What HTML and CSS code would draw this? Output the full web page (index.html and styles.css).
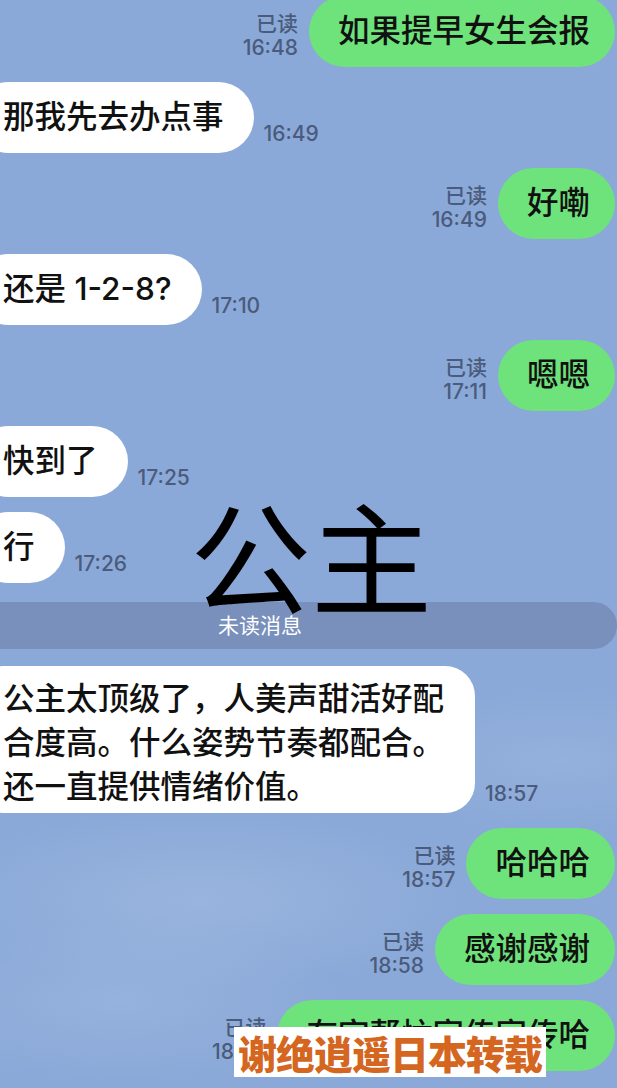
FILE: index.html
```html
<!DOCTYPE html>
<html lang="zh-CN">

<head>
    <meta charset="UTF-8">
    <meta name="viewport" content="width=device-width, initial-scale=1.0">
    <title>聊天记录</title>
    <link rel="stylesheet" href="styles.css">
</head>

<body>

    <main class="chat">

        <div class="row out">
            <div class="meta"><span>已读</span><span>16:48</span></div>
            <div class="bubble green">如果提早女生会报</div>
        </div>

        <div class="row in">
            <div class="bubble white">那我先去办点事</div>
            <div class="meta"><span>16:49</span></div>
        </div>

        <div class="row out">
            <div class="meta"><span>已读</span><span>16:49</span></div>
            <div class="bubble green">好嘞</div>
        </div>

        <div class="row in">
            <div class="bubble white">还是 1-2-8?</div>
            <div class="meta"><span>17:10</span></div>
        </div>

        <div class="row out">
            <div class="meta"><span>已读</span><span>17:11</span></div>
            <div class="bubble green">嗯嗯</div>
        </div>

        <div class="row in">
            <div class="bubble white">快到了</div>
            <div class="meta"><span>17:25</span></div>
        </div>

        <div class="row in">
            <div class="bubble white">行</div>
            <div class="meta"><span>17:26</span></div>
        </div>

        <!-- 未读分隔条 -->
        <div class="unread">未读消息</div>

        <div class="row in">
            <div class="bubble white long">公主太顶级了，人美声甜活好配合度高。什么姿势节奏都配合。还一直提供情绪价值。</div>
            <div class="meta"><span>18:57</span></div>
        </div>

        <div class="row out">
            <div class="meta"><span>已读</span><span>18:57</span></div>
            <div class="bubble green">哈哈哈</div>
        </div>

        <div class="row out">
            <div class="meta"><span>已读</span><span>18:58</span></div>
            <div class="bubble green">感谢感谢</div>
        </div>

        <div class="row out">
            <div class="meta"><span>已读</span><span>18:58</span></div>
            <div class="bubble green">有空帮忙宣传宣传哈</div>
        </div>

    </main>

    <!-- 叠加文字 -->
    <div class="stamp">公主</div>
    <div class="watermark">谢绝逍遥日本转载</div>

</body>

</html>
```

FILE: styles.css
```css
body {
    margin: 0;
    height: 1088px;
    overflow: hidden;
    position: relative;
    font-family: Inter, "Noto Sans CJK SC", sans-serif;
    background-color: #8ba9d8;
    background-image:
        radial-gradient(ellipse 260px 90px at 200px 900px, rgba(170, 195, 230, 0.45), transparent),
        radial-gradient(ellipse 220px 80px at 120px 1000px, rgba(165, 190, 228, 0.4), transparent),
        radial-gradient(ellipse 180px 70px at 560px 760px, rgba(165, 190, 228, 0.35), transparent);
}

.chat {
    display: flex;
    flex-direction: column;
    gap: 15px;
    margin-top: -4px;
}

.row {
    display: flex;
    align-items: flex-end;
}

.row.out {
    justify-content: flex-end;
}

.bubble {
    font-size: 31.5px;
    font-weight: 500;
    line-height: 44px;
    color: #111;
    padding: 13px 25px 14px 29px;
    border-radius: 36px;
    white-space: nowrap;
}

.green {
    background-color: #6ee27b;
    margin-right: 2px;
}

.white {
    background-color: #fff;
    margin-left: -27px;
    padding: 13px 30px 14px 30px;
}

.long {
    white-space: normal;
    width: 442px;
    padding: 11px 30px 4px 30px;
    border-radius: 30px;
}

.meta {
    display: flex;
    flex-direction: column;
    align-items: flex-end;
    font-size: 21px;
    font-weight: 500;
    line-height: 24px;
    color: #4a5b7b;
    margin-bottom: 7px;
}

.out .meta {
    margin-right: 11px;
}

.in .meta {
    margin-left: 10px;
}

.unread {
    height: 47px;
    margin: 4px 0 2px 0;
    background-color: #7890bb;
    border-radius: 0 24px 24px 0;
    color: #fff;
    font-size: 21px;
    line-height: 47px;
    padding-left: 218px;
}

.stamp {
    position: absolute;
    left: 190px;
    top: 480px;
    font-family: "Noto Sans CJK SC", sans-serif;
    font-size: 121px;
    line-height: 1.2;
    color: #000;
}

.watermark {
    position: absolute;
    left: 234px;
    top: 1027px;
    width: 312px;
    height: 50px;
    background-color: #fff;
    color: #d4661f;
    font-family: "Noto Sans CJK SC", sans-serif;
    font-weight: 900;
    font-size: 39px;
    line-height: 50px;
    letter-spacing: -1px;
    text-align: center;
}
```
